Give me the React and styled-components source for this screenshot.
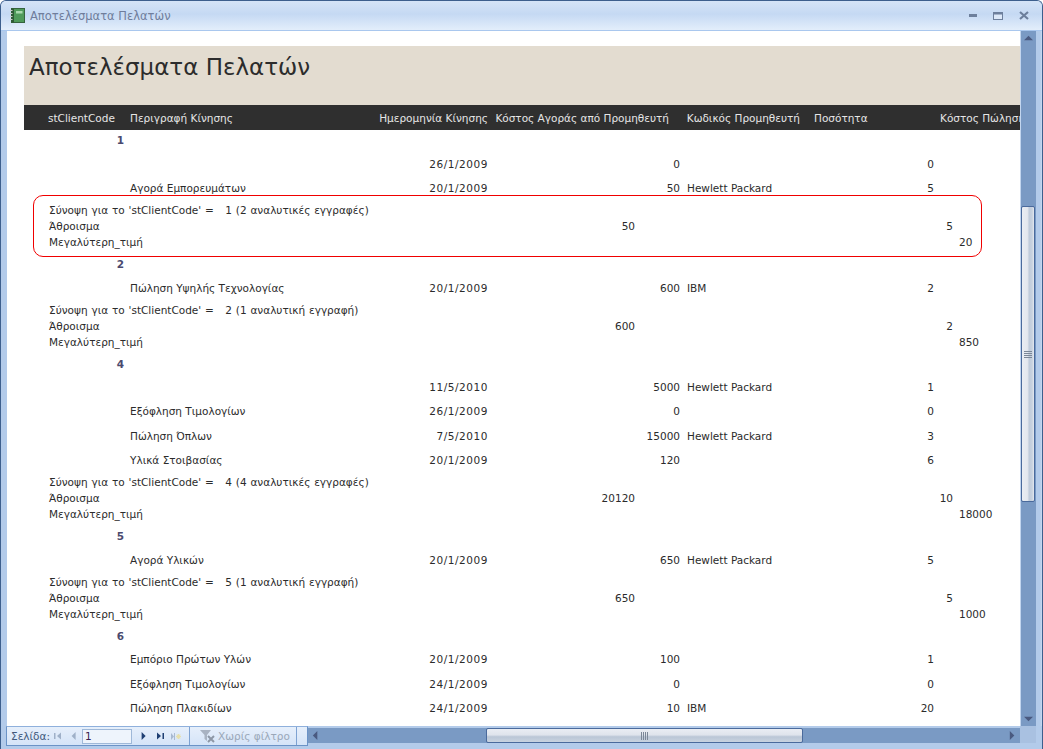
import React from 'react';
import styled, { createGlobalStyle } from 'styled-components';

const Global = createGlobalStyle`
  html, body {
    margin: 0;
    padding: 0;
    width: 1043px;
    height: 749px;
    overflow: hidden;
  }
`;

const Window = styled.div`
  width: 1043px;
  height: 749px;
  display: flex;
  flex-direction: column;
  box-sizing: border-box;
  background: #b3cbea;
  border: 1px solid #3d5f8d;
  border-bottom: 0;
  border-radius: 6px 6px 0 0;
  overflow: hidden;
  font-family: 'DejaVu Sans', sans-serif;
  font-size: 10.5px;
  color: #222;
`;
const TitleBar = styled.div`
  height: 30px;
  flex: none;
  display: flex;
  align-items: center;
  padding: 0 13px 0 9px;
  gap: 5px;
  box-sizing: border-box;
  background: linear-gradient(#d5e4f7, #c5d9f3 45%, #e3eefb);
  border-bottom: 1px solid #a9c7ee;
  color: #6f7d9b;
  font-size: 11.5px;
`;
const TitleText = styled.span`
  flex: 1;
`;
const WinButtons = styled.div`
  display: flex;
  align-items: center;
  gap: 16px;
`;
const Middle = styled.div`
  flex: 1;
  min-height: 0;
  display: flex;
  padding-left: 6px;
`;
const Sheet = styled.div`
  flex: 1;
  min-width: 0;
  position: relative;
  background: #fff;
  overflow: hidden;
  padding: 15px 0 0 17px;
`;
const ReportTitle = styled.div`
  height: 59px;
  box-sizing: border-box;
  background: #e3dcd0;
  color: #2c2c2c;
  font-size: 23px;
  padding: 5px 0 0 5px;
  line-height: 32px;
`;
const HeadRow = styled.div`
  height: 25px;
  width: 1040px;
  background: #2f2f2f;
  color: #e6e6e6;
  display: grid;
  grid-template-columns: 24px 82px 240px 118px 181px 131px 140px 1fr;
  align-items: center;
  white-space: nowrap;
`;
const HeadCell = styled.span`
  grid-column: ${(p) => p.$col};
  text-align: ${(p) => (p.$right ? 'right' : 'left')};
  padding-left: ${(p) => p.$pad || 0}px;
`;
const Rows = styled.div`
  width: 1040px;
  white-space: nowrap;
  color: #2b2b2b;
`;
const GroupRow = styled.div`
  height: ${(p) => p.$h}px;
  line-height: 20px;
  width: 100px;
  text-align: right;
  font-weight: bold;
  color: #4b4a6e;
`;
const DetailRow = styled.div`
  height: ${(p) => p.$h || 24}px;
  display: grid;
  grid-template-columns: 346px 118px 192px 150px 104px;
  line-height: 20px;
`;
const Desc = styled.span`
  padding-left: 106px;
`;
const DateCell = styled.span`
  text-align: right;
  letter-spacing: 0.55px;
`;
const Cost = styled.span`
  text-align: right;
`;
const Supplier = styled.span`
  padding-left: 7px;
`;
const Qty = styled.span`
  text-align: right;
`;
const Summary = styled.div`
  height: 54px;
  padding: 2px 0 0 25px;
  box-sizing: border-box;
`;
const SumLine = styled.div`
  height: 16px;
  line-height: 16px;
`;
const SumCaption = styled(SumLine)`
  white-space: pre;
  word-spacing: 0.5px;
`;
const SumGrid = styled(SumLine)`
  display: grid;
  grid-template-columns: 586px 318px;
`;
const SumLeft = styled.span`
  display: flex;
  justify-content: space-between;
`;
const SumValue = styled.span`
  text-align: right;
`;
const MaxLine = styled(SumLine)`
  display: grid;
  grid-template-columns: 910px 1fr;
`;
const Callout = styled.div`
  position: absolute;
  left: 26px;
  top: 164px;
  width: 949px;
  height: 62px;
  box-sizing: border-box;
  border: 1px solid #f00000;
  border-radius: 10px;
  pointer-events: none;
`;
const VScroll = styled.div`
  width: 15px;
  flex: none;
  display: flex;
  flex-direction: column;
  align-items: center;
  background: #7a9ac4;
  border-left: 1px solid #c3d6ef;
`;
const Arrow = styled.div`
  height: 15px;
  flex: none;
  display: flex;
  align-items: center;
  justify-content: center;
`;
const Track = styled.div`
  flex: 1;
  width: 100%;
  padding-top: 160px;
  box-sizing: border-box;
`;
const ThumbV = styled.div`
  height: 296px;
  margin: 0 1px 0 0;
  border: 1px solid #4a6a9c;
  border-radius: 2px;
  box-sizing: border-box;
  background: linear-gradient(90deg, #e9edf3, #e3e7ee 45%, #bfcbdb 60%, #c8d2df 85%, #e6eaf0);
  display: flex;
  align-items: center;
  justify-content: center;
`;
const GripV = styled.div`
  width: 8px;
  height: 7px;
  background: repeating-linear-gradient(#7b8797 0 1px, transparent 1px 2px);
`;
const RightEdge = styled.div`
  width: 6px;
  flex: none;
  background: linear-gradient(90deg, #b3cbea 70%, #c8daf1);
`;
const BottomBar = styled.div`
  height: 23px;
  flex: none;
  display: flex;
  align-items: flex-start;
  padding-left: 5px;
`;
const NavBar = styled.div`
  width: 302px;
  height: 20px;
  flex: none;
  display: flex;
  align-items: center;
  box-sizing: border-box;
  border: 1px solid #6b93c7;
  border-top-color: #8fb0dc;
  background: linear-gradient(#e6effb, #d5e4f8);
  color: #41587a;
  padding-left: 4px;
`;
const NavLabel = styled.span`
  width: 38px;
  flex: none;
`;
const NavBtn = styled.span`
  width: ${(p) => p.$w || 17}px;
  flex: none;
  display: flex;
  justify-content: center;
  align-items: center;
`;
const PageBox = styled.div`
  width: 50px;
  height: 15px;
  flex: none;
  box-sizing: border-box;
  margin-right: 3px;
  border: 1px solid #9fb8d8;
  background: #eef4fc;
  color: #3a1f4f;
  line-height: 13px;
  padding-left: 2px;
`;
const FilterCell = styled.div`
  width: 108px;
  flex: none;
  height: 100%;
  margin-left: 5px;
  display: flex;
  align-items: center;
  gap: 2px;
  padding-left: 10px;
  box-sizing: border-box;
  border-left: 1px solid #7ea2d2;
  border-right: 1px solid #7ea2d2;
  color: #9aa7b8;
  white-space: nowrap;
`;
const HScroll = styled.div`
  flex: 1;
  min-width: 0;
  height: 15px;
  margin-top: 2px;
  display: flex;
  align-items: center;
  background: #7a9ac4;
`;
const HEnd = styled.div`
  width: 15px;
  flex: none;
  display: flex;
  justify-content: center;
`;
const HTrack = styled.div`
  flex: 1;
  height: 100%;
  padding-left: 163px;
`;
const ThumbH = styled.div`
  width: 317px;
  height: 100%;
  box-sizing: border-box;
  border: 1px solid #4a6a9c;
  border-radius: 2px;
  background: linear-gradient(#e9edf3, #dfe4ec 45%, #bac6d6 60%, #c9d3e0);
  display: flex;
  align-items: center;
  justify-content: center;
`;
const GripH = styled.div`
  width: 7px;
  height: 8px;
  background: repeating-linear-gradient(90deg, #7b8797 0 1px, transparent 1px 2px);
`;
const Corner = styled.div`
  width: 22px;
  flex: none;
  height: 17px;
  background: linear-gradient(90deg, #a9c1e1 16px, #b3cbea 16px);
`;

const triPoints = {
  up: '0,7 5,2 10,7',
  down: '0,3 10,3 5,8',
  left: '7,0 7,10 2,5',
  right: '2,0 2,10 7,5',
};

const Tri = ({ dir, color = '#4a5a80', size = 7 }) => (
  <svg width={size} height={size} viewBox='0 0 10 10'>
    <polygon points={triPoints[dir]} fill={color} />
  </svg>
);

const FirstIcon = ({ color }) => (
  <svg width='8' height='8' viewBox='0 0 8 8'>
    <rect x='0' y='1' width='1.5' height='6' fill={color} />
    <polygon points='7,0.5 7,7.5 3,4' fill={color} />
  </svg>
);

const LastIcon = ({ color }) => (
  <svg width='8' height='8' viewBox='0 0 8 8'>
    <polygon points='1,0.5 1,7.5 5,4' fill={color} />
    <rect x='6.5' y='1' width='1.5' height='6' fill={color} />
  </svg>
);

const NewIcon = () => (
  <svg width='10' height='9' viewBox='0 0 10 9'>
    <polygon points='0,1 0,8 3,4.5' fill='#a9bad2' />
    <rect x='3' y='1' width='1' height='7' fill='#a9bad2' />
    <path d='M5 4.5 H10 M7.5 2 V7 M5.7 2.7 L9.3 6.3 M9.3 2.7 L5.7 6.3' stroke='#e6dfae' strokeWidth='1.1' />
  </svg>
);

const BookIcon = () => (
  <svg width='15' height='15' viewBox='0 0 15 15'>
    <rect x='1.5' y='0.5' width='13' height='14' fill='#4f9a5a' stroke='#35633d' />
    <rect x='1.5' y='0.5' width='2.5' height='14' fill='#2e5a35' />
    <rect x='6' y='3' width='6.5' height='2.5' fill='#a9d8ad' />
    <rect x='0' y='2' width='2.5' height='1' fill='#ccc' />
    <rect x='0' y='5' width='2.5' height='1' fill='#ccc' />
    <rect x='0' y='8' width='2.5' height='1' fill='#ccc' />
    <rect x='0' y='11' width='2.5' height='1' fill='#ccc' />
  </svg>
);

const FilterIcon = () => (
  <svg width='16' height='14' viewBox='0 0 16 14'>
    <polygon points='0,1 11,1 7,6 7,12 4.5,10 4.5,6' fill='#a9b3c2' />
    <path d='M8 7 L14 13 M14 7 L8 13' stroke='#8d97a6' strokeWidth='2' />
  </svg>
);

const groups = [
  {
    n: '1',
    h: 24,
    items: [
      { date: '26/1/2009', cost: '0', qty: '0' },
      { desc: 'Αγορά Εμπορευμάτων', date: '20/1/2009', cost: '50', sup: 'Hewlett Packard', qty: '5', h: 22 },
    ],
    summary: { label: "Σύνοψη για το 'stClientCode' =   1 (2 αναλυτικές εγγραφές)", sum: '50', qty: '5', max: '20' },
  },
  {
    n: '2',
    h: 24,
    items: [
      { desc: 'Πώληση Υψηλής Τεχνολογίας', date: '20/1/2009', cost: '600', sup: 'IBM', qty: '2', h: 22 },
    ],
    summary: { label: "Σύνοψη για το 'stClientCode' =   2 (1 αναλυτική εγγραφή)", sum: '600', qty: '2', max: '850' },
  },
  {
    n: '4',
    h: 23,
    items: [
      { date: '11/5/2010', cost: '5000', sup: 'Hewlett Packard', qty: '1' },
      { desc: 'Εξόφληση Τιμολογίων', date: '26/1/2009', cost: '0', qty: '0', h: 25 },
      { desc: 'Πώληση Όπλων', date: '7/5/2010', cost: '15000', sup: 'Hewlett Packard', qty: '3' },
      { desc: 'Υλικά Στοιβασίας', date: '20/1/2009', cost: '120', qty: '6', h: 22 },
    ],
    summary: { label: "Σύνοψη για το 'stClientCode' =   4 (4 αναλυτικές εγγραφές)", sum: '20120', qty: '10', max: '18000' },
  },
  {
    n: '5',
    h: 24,
    items: [
      { desc: 'Αγορά Υλικών', date: '20/1/2009', cost: '650', sup: 'Hewlett Packard', qty: '5', h: 22 },
    ],
    summary: { label: "Σύνοψη για το 'stClientCode' =   5 (1 αναλυτική εγγραφή)", sum: '650', qty: '5', max: '1000' },
  },
  {
    n: '6',
    h: 23,
    items: [
      { desc: 'Εμπόριο Πρώτων Υλών', date: '20/1/2009', cost: '100', qty: '1', h: 25 },
      { desc: 'Εξόφληση Τιμολογίων', date: '24/1/2009', cost: '0', qty: '0' },
      { desc: 'Πώληση Πλακιδίων', date: '24/1/2009', cost: '10', sup: 'IBM', qty: '20' },
    ],
  },
];

function App() {
  return (
    <Window>
      <Global />
      <TitleBar>
        <BookIcon />
        <TitleText>Αποτελέσματα Πελατών</TitleText>
        <WinButtons>
          <svg width='8' height='4' viewBox='0 0 8 4'><rect width='8' height='3' fill='#6d7f9c' /></svg>
          <svg width='10' height='8' viewBox='0 0 10 8'><rect x='0.5' y='0.5' width='9' height='7' fill='#dce8f8' stroke='#6d7f9c' /><rect width='10' height='2.5' fill='#6d7f9c' /></svg>
          <svg width='10' height='9' viewBox='0 0 10 9'><path d='M1 1 L9 8 M9 1 L1 8' stroke='#6d7f9c' strokeWidth='2.2' /></svg>
        </WinButtons>
      </TitleBar>
      <Middle>
        <Sheet>
          <ReportTitle>Αποτελέσματα Πελατών</ReportTitle>
          <HeadRow>
            <HeadCell $col={2}>stClientCode</HeadCell>
            <HeadCell $col={3}>Περιγραφή Κίνησης</HeadCell>
            <HeadCell $col={4} $right>Ημερομηνία Κίνησης</HeadCell>
            <HeadCell $col={5} $right>Κόστος Αγοράς από Προμηθευτή</HeadCell>
            <HeadCell $col={6} $right>Κωδικός Προμηθευτή</HeadCell>
            <HeadCell $col={7} $pad={14}>Ποσότητα</HeadCell>
            <HeadCell $col={8}>Κόστος Πώλησης</HeadCell>
          </HeadRow>
          <Rows>
            {groups.map((g) => (
              <React.Fragment key={g.n}>
                <GroupRow $h={g.h}>{g.n}</GroupRow>
                {g.items.map((it, i) => (
                  <DetailRow key={i} $h={it.h}>
                    <Desc>{it.desc}</Desc>
                    <DateCell>{it.date}</DateCell>
                    <Cost>{it.cost}</Cost>
                    <Supplier>{it.sup}</Supplier>
                    <Qty>{it.qty}</Qty>
                  </DetailRow>
                ))}
                {g.summary && (
                  <Summary>
                    <SumCaption>{g.summary.label}</SumCaption>
                    <SumGrid>
                      <SumLeft>
                        <span>Άθροισμα</span>
                        <span>{g.summary.sum}</span>
                      </SumLeft>
                      <SumValue>{g.summary.qty}</SumValue>
                    </SumGrid>
                    <MaxLine>
                      <span>Μεγαλύτερη_τιμή</span>
                      <span>{g.summary.max}</span>
                    </MaxLine>
                  </Summary>
                )}
              </React.Fragment>
            ))}
          </Rows>
          <Callout />
        </Sheet>
        <VScroll>
          <Arrow><Tri dir='up' size={9} /></Arrow>
          <Track>
            <ThumbV><GripV /></ThumbV>
          </Track>
          <Arrow><Tri dir='down' size={9} /></Arrow>
        </VScroll>
        <RightEdge />
      </Middle>
      <BottomBar>
        <NavBar>
          <NavLabel>Σελίδα:</NavLabel>
          <NavBtn><FirstIcon color='#9fb0c8' /></NavBtn>
          <NavBtn $w={16}><Tri dir='left' color='#9fb0c8' size={8} /></NavBtn>
          <PageBox>1</PageBox>
          <NavBtn><Tri dir='right' color='#1f3f73' size={8} /></NavBtn>
          <NavBtn $w={16}><LastIcon color='#1f3f73' /></NavBtn>
          <NavBtn $w={16}><NewIcon /></NavBtn>
          <FilterCell><FilterIcon />Χωρίς φίλτρο</FilterCell>
        </NavBar>
        <HScroll>
          <HEnd><Tri dir='left' size={9} /></HEnd>
          <HTrack><ThumbH><GripH /></ThumbH></HTrack>
          <HEnd><Tri dir='right' size={9} /></HEnd>
        </HScroll>
        <Corner />
      </BottomBar>
    </Window>
  );
}

export default App;
